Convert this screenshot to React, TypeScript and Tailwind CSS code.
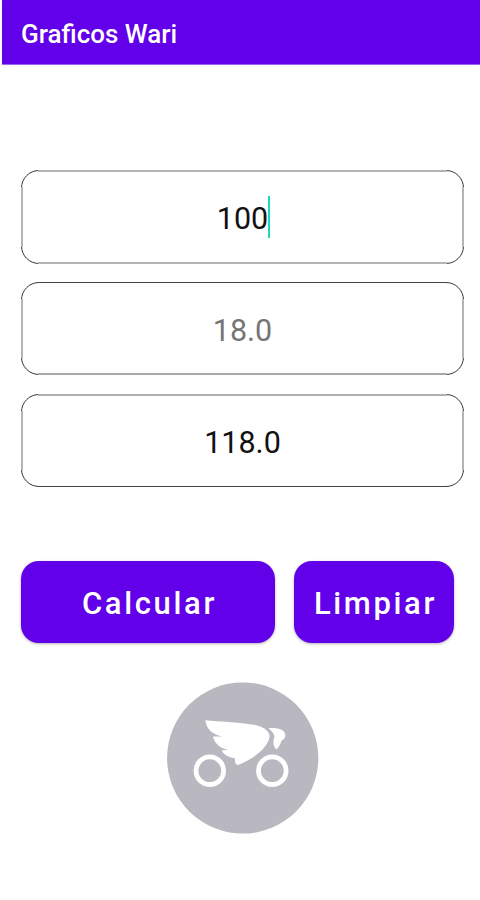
import React from "react";

const corners = [
  { clip: "left-[-3px] top-[-3px]", arc: "left-[3px] top-[3px]" },
  { clip: "right-[-3px] top-[-3px]", arc: "right-[3px] top-[3px]" },
  { clip: "left-[-3px] bottom-[-3px]", arc: "left-[3px] bottom-[3px]" },
  { clip: "right-[-3px] bottom-[-3px]", arc: "right-[3px] bottom-[3px]" },
];

function Field({ lines, children }: { lines: string; children: React.ReactNode }) {
  return (
    <div className="relative text-[30.5px] leading-none">
      <div className={`flex items-center justify-center rounded-[18px] ${lines}`}>
        {children}
      </div>
      {corners.map(({ clip, arc }) => (
        <span key={clip} className={`absolute size-[20px] overflow-hidden bg-white ${clip}`}>
          <span className={`absolute size-[60px] rounded-[18px] border border-[#333] ${arc}`} />
        </span>
      ))}
    </div>
  );
}

function Logo() {
  return (
    <svg className="mx-auto mt-[39px] block size-[152px]" viewBox="167 682 152 152">
      <circle cx="242.7" cy="758" r="75.6" fill="#b9b7bf" />
      <g fill="none" stroke="#fff" strokeWidth="4.8">
        <circle cx="209.8" cy="770.7" r="13.8" />
        <circle cx="272.3" cy="770.7" r="13.8" />
      </g>
      <path
        fill="#fff"
        d="M205.3 720.3C219 721.6 238 722.4 252 724.4C261 725.5 269.3 730 269.6 736C269 744 261 752.5 251 758.5C246 761.5 241.5 764 237.5 765C235 764.2 234.8 761.2 235 758.4C230 757.6 223.5 755 221.8 750.4L228 749.4C220.5 748.6 214.5 743.5 212.9 736.4L222.5 736.6C213 735 206.5 729.5 205.3 720.3Z"
      />
      <path
        fill="#fff"
        d="M268.4 728.3C273 727.8 278.5 728.2 281.5 729.8C284.6 731.4 285.6 734 285.2 736.4C284.8 738.2 283.4 739.6 281.6 740.6C280.7 743.4 279.4 746.4 276.4 749.8C273.4 746.5 272.8 743 273.8 739.5L274.6 736.2C273.6 733.6 272 731.2 268.4 728.3Z"
      />
    </svg>
  );
}

export default function App() {
  return (
    <main className="h-[900px] w-[480px] overflow-hidden bg-white font-['Roboto',sans-serif] text-[#111]">
      <header className="ml-[2px] flex h-[65px] items-center border-b border-[#9a66f0] bg-[#6200ea] pt-[4px] pl-[19px] shadow-[0_2px_4px_rgba(0,0,0,0.03)]">
        <h1 className="text-[26px] leading-none font-medium text-white">Graficos Wari</h1>
      </header>

      <section className="mt-[105px] ml-[21px] flex w-[443px] flex-col">
        <Field lines="h-[94px] pt-[4px] border-2 border-[#b4b4b4]">
          <span>100</span>
          <span className="absolute top-[26px] left-[247px] h-[42px] w-[2px] bg-[#1bd8bf]" />
        </Field>
        <div className="mt-[18px]">
          <Field lines="h-[93px] pt-[6px] border-x-2 border-t border-b-2 border-x-[#b4b4b4] border-t-[#444] border-b-[#a8a8a8]">
            <span className="text-[#757575]">18.0</span>
          </Field>
        </div>
        <div className="mt-[19px]">
          <Field lines="h-[93px] pt-[4px] border-x-2 border-t-2 border-b border-x-[#b4b4b4] border-t-[#b0b0b0] border-b-[#444]">
            <span>118.0</span>
          </Field>
        </div>
      </section>

      <div className="mt-[74px] ml-[21px] flex gap-[19px] text-[31px] leading-none font-medium tracking-[2.65px] text-white">
        <button className="h-[82px] w-[254px] rounded-[18px] bg-[#6200ea] pt-[3px] pl-[3px] shadow-[0_1px_3px_rgba(0,0,0,0.3)]">
          Calcular
        </button>
        <button className="h-[82px] w-[160px] rounded-[18px] bg-[#6200ea] pt-[3px] pl-[3px] shadow-[0_1px_3px_rgba(0,0,0,0.3)]">
          Limpiar
        </button>
      </div>

      <div className="pl-[5px]">
        <Logo />
      </div>
    </main>
  );
}
